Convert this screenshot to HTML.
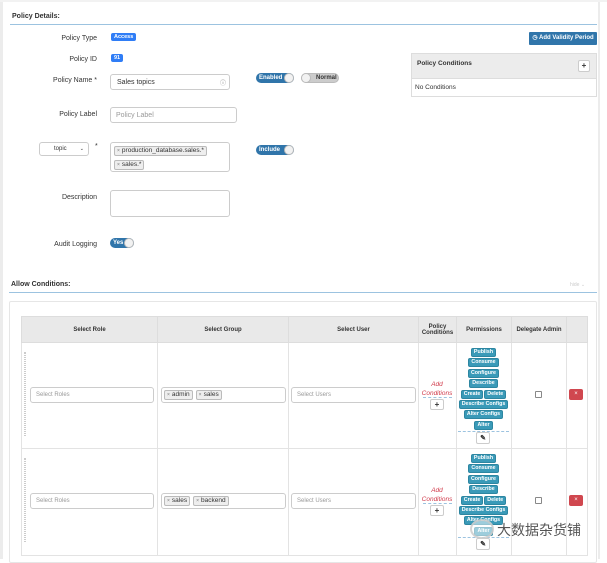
<!DOCTYPE html>
<html><head><meta charset="utf-8"><style>
*{box-sizing:border-box;margin:0;padding:0}
body{width:607px;height:559px;overflow:hidden;background:#fff;font-family:"Liberation Sans",Arial,sans-serif;font-size:7px;color:#333;position:relative}
.a{position:absolute}
.lbl{position:absolute;right:510px;text-align:right;font-size:7px;white-space:nowrap;margin-top:2px}
.badge{position:absolute;background:#2f7df6;color:#fff;font-weight:bold;font-size:5.5px;border-radius:2px;padding:1px 3px;line-height:6px}
.inp{position:absolute;border:1px solid #ccc;border-radius:3px;background:#fff;font-size:7px;padding-left:5px;display:flex;align-items:center}
.ph{color:#999}
.tog{position:absolute;height:10px;border-radius:5px;background:#3075aa;color:#fff;font-weight:bold;font-size:6px;padding-left:3px;white-space:nowrap;display:flex;align-items:center}
.tog::after{content:"";position:absolute;right:0;top:0;width:10px;height:10px;border-radius:50%;background:#f2f2f2;border:1px solid #bbb;box-sizing:border-box}
.tog.n::after{display:none}
.tag{display:inline-block;background:#eee;border:1px solid #bbb;border-radius:2px;font-size:6.5px;padding:0 2px;line-height:8px;margin-right:3px}
.tag i{font-style:normal;color:#777;font-size:5px;margin-right:2px}
.hd{position:absolute;font-weight:bold;font-size:7px}
.pm{display:inline-block;background:#3a9ab8;color:#fff;font-weight:bold;font-size:5.3px;border-radius:2px;padding:0 2px;line-height:7px;margin:0 0.5px;border:1px solid #2d86a1;vertical-align:top}
.perm{position:absolute;left:456px;width:55px;text-align:center}
.perm div{height:10.4px}
th{background:#e9e9e9;font-size:6px;font-weight:bold;border:1px solid #ddd;height:26px}
td{border:1px solid #e3e3e3}
.plus{position:absolute;width:14px;height:11px;border:1px solid #ccc;background:#fff;border-radius:2px;text-align:center;font-weight:bold;font-size:8px;line-height:9px}
.x{position:absolute;left:569px;width:14px;height:11px;background:#d0474f;border-radius:2px;color:#fff;font-size:6px;text-align:center;line-height:11px}
.cb{position:absolute;left:535px;width:7px;height:7px;border:1px solid #888;border-radius:1px}
.addc{position:absolute;left:418px;width:38px;text-align:center;color:#d03a4a;font-style:italic;font-size:6.5px;line-height:9px}
.drag{position:absolute;left:24px;width:2px;border-left:1px dotted #ccc;border-right:1px dotted #ccc}
</style></head><body>
<div class="a" style="left:0;top:0;width:3px;height:559px;background:#ececec"></div>
<div class="a" style="left:598px;top:0;width:2px;height:559px;background:#ececec"></div>
<div class="a" style="left:0;top:0;width:607px;height:2px;background:#f2f2f2"></div>

<div class="hd" style="left:12px;top:13px">Policy Details:</div>
<div class="a" style="left:10px;top:24px;width:587px;height:1px;background:#9cc3e0"></div>

<div class="lbl" style="top:33px">Policy Type</div>
<div class="badge" style="left:111px;top:33px">Access</div>
<div class="lbl" style="top:54px">Policy ID</div>
<div class="badge" style="left:111px;top:54px">91</div>
<div class="lbl" style="top:75px">Policy Name *</div>
<div class="inp" style="left:110px;top:74px;width:120px;height:16px;padding-left:6px">Sales topics<span style="position:absolute;right:3px;font-size:6px;color:#777">&#9432;</span></div>
<div class="tog" style="left:256px;top:73px;width:38px">Enabled</div>
<div class="tog n" style="left:301px;top:73px;width:38px;background:#ccc;color:#333;padding-left:14px;border:1px solid #bbb">Normal</div>
<div class="a" style="left:301px;top:73px;width:10px;height:10px;border-radius:50%;background:#f2f2f2;border:1px solid #bbb"></div>

<div class="a" style="left:529px;top:32px;width:68px;height:13px;background:#3075aa;color:#fff;font-size:6px;font-weight:bold;text-align:center;line-height:13px;border-radius:1px">&#9719; Add Validity Period</div>
<div class="a" style="left:411px;top:53px;width:186px;height:44px;border:1px solid #ddd"></div>
<div class="a" style="left:412px;top:54px;width:184px;height:25px;background:#ececec;border-bottom:1px solid #ddd"></div>
<div class="a" style="left:417px;top:60px;font-weight:bold;font-size:6.5px">Policy Conditions</div>
<div class="plus" style="left:578px;top:60px;width:12px;height:12px">+</div>
<div class="a" style="left:415px;top:84px;font-size:6.5px">No Conditions</div>

<div class="lbl" style="top:109px">Policy Label</div>
<div class="inp" style="left:110px;top:107px;width:127px;height:16px"><span class="ph">Policy Label</span></div>

<div class="inp" style="left:39px;top:142px;width:50px;height:14px;font-size:6px;padding-left:14px">topic<span style="position:absolute;right:4px;font-size:5px">&#8964;</span></div>
<div class="a" style="left:95px;top:143px">*</div>
<div class="inp" style="left:110px;top:142px;width:120px;height:30px;display:block;padding:3px 0 0 3px">
<div><span class="tag"><i>×</i>production_database.sales.*</span></div>
<div style="margin-top:4px"><span class="tag"><i>×</i>sales.*</span></div></div>
<div class="tog" style="left:256px;top:145px;width:38px">Include</div>

<div class="lbl" style="top:192px">Description</div>
<div class="inp" style="left:110px;top:190px;width:120px;height:27px"></div>
<div class="lbl" style="top:239px">Audit Logging</div>
<div class="tog" style="left:110px;top:238px;width:24px">Yes</div>

<div class="hd" style="left:11px;top:281px">Allow Conditions:</div>
<div class="a" style="left:570px;top:282px;font-size:5px;color:#ccc">hide &#8964;</div>
<div class="a" style="left:9px;top:292px;width:588px;height:1px;background:#9cc3e0"></div>
<div class="a" style="left:9px;top:301px;width:588px;height:262px;border:1px solid #e6e6e6;border-radius:2px"></div>

<table class="a" style="left:21px;top:316px;width:566px;border-collapse:collapse;table-layout:fixed">
<colgroup><col style="width:136px"><col style="width:131px"><col style="width:130px"><col style="width:38px"><col style="width:55px"><col style="width:55px"><col style="width:21px"></colgroup>
<tr><th>Select Role</th><th>Select Group</th><th>Select User</th><th>Policy<br>Conditions</th><th>Permissions</th><th>Delegate Admin</th><th></th></tr>
<tr style="height:106px"><td></td><td></td><td></td><td></td><td></td><td></td><td></td></tr>
<tr style="height:107px"><td></td><td></td><td></td><td></td><td></td><td></td><td></td></tr>
</table>

<div class="drag" style="top:352px;height:84px"></div>
<div class="inp" style="left:30px;top:387px;width:124px;height:16px;font-size:6px"><span class="ph">Select Roles</span></div>
<div class="inp" style="left:161px;top:387px;width:125px;height:16px;padding-left:2px"><span class="tag"><i>×</i>admin</span><span class="tag"><i>×</i>sales</span></div>
<div class="inp" style="left:291px;top:387px;width:125px;height:16px;font-size:6px"><span class="ph">Select Users</span></div>
<div class="addc" style="top:380px">Add<br>Conditions</div>
<div class="a" style="left:423px;top:397px;width:29px;border-top:1px dashed #9cc3e0"></div>
<div class="plus" style="left:430px;top:399px">+</div>
<div class="perm" style="top:348px"><div><span class="pm">Publish</span></div><div><span class="pm">Consume</span></div><div><span class="pm">Configure</span></div><div><span class="pm">Describe</span></div><div><span class="pm">Create</span><span class="pm">Delete</span></div><div><span class="pm">Describe Configs</span></div><div><span class="pm">Alter Configs</span></div><div><span class="pm">Alter</span></div></div>
<div class="a" style="left:458px;top:431px;width:51px;border-top:1px dashed #9cc3e0"></div>
<div class="plus" style="left:476px;top:432px;height:12px;font-size:7px;line-height:11px">&#9998;</div>
<div class="cb" style="top:391px"></div>
<div class="x" style="top:389px">×</div>

<div class="drag" style="top:458px;height:84px"></div>
<div class="inp" style="left:30px;top:493px;width:124px;height:16px;font-size:6px"><span class="ph">Select Roles</span></div>
<div class="inp" style="left:161px;top:493px;width:125px;height:16px;padding-left:2px"><span class="tag"><i>×</i>sales</span><span class="tag"><i>×</i>backend</span></div>
<div class="inp" style="left:291px;top:493px;width:125px;height:16px;font-size:6px"><span class="ph">Select Users</span></div>
<div class="addc" style="top:486px">Add<br>Conditions</div>
<div class="a" style="left:423px;top:503px;width:29px;border-top:1px dashed #9cc3e0"></div>
<div class="plus" style="left:430px;top:505px">+</div>
<div class="perm" style="top:454px"><div><span class="pm">Publish</span></div><div><span class="pm">Consume</span></div><div><span class="pm">Configure</span></div><div><span class="pm">Describe</span></div><div><span class="pm">Create</span><span class="pm">Delete</span></div><div><span class="pm">Describe Configs</span></div><div><span class="pm">Alter Configs</span></div><div><span class="pm">Alter</span></div></div>
<div class="a" style="left:458px;top:537px;width:51px;border-top:1px dashed #9cc3e0"></div>
<div class="plus" style="left:476px;top:538px;height:12px;font-size:7px;line-height:11px">&#9998;</div>
<div class="cb" style="top:497px"></div>
<div class="x" style="top:495px">×</div>

<div class="a" style="left:470px;top:519px;width:24px;height:20px;border:2px solid rgba(200,200,200,0.8);border-radius:50%;background:rgba(255,255,255,0.5)"></div>
<div class="a" style="left:497px;top:520px;font-family:'Liberation Sans','Noto Sans CJK SC',sans-serif;font-size:14px;color:#555;text-shadow:0 0 2px #fff">大数据杂货铺</div>
</body></html>
